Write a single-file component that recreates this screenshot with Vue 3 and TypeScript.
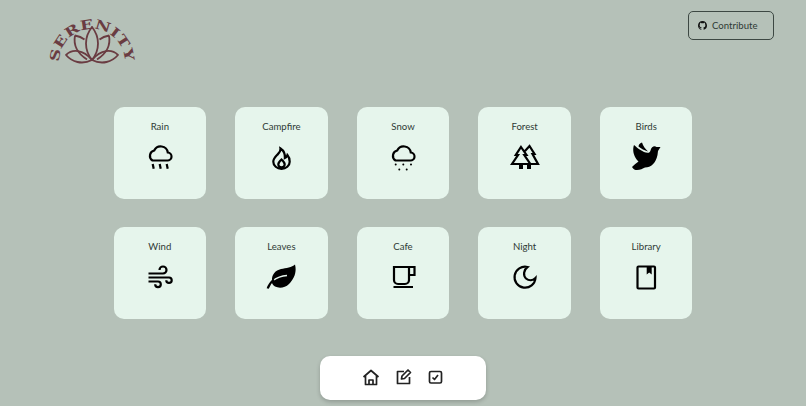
<script setup lang="ts">
interface Sound {
  name: string
  line?: string
  solid?: string
  vein?: string
}

const cloud = 'M7.500 18.500h14.700a4 4 0 0 0 .6-8 7.200 7.200 0 0 0-13.600-2A5.500 5.500 0 0 0 7.500 18.500z'

const sounds: Sound[] = [
  { name: 'Rain', line: cloud + 'M7.700 22l1 4.800M14.700 22l1 4.800M21.700 22l1 4.800' },
  {
    name: 'Campfire',
    line: 'M14.500 6.500c.5 3-1.500 4.500-3.500 6.500-2 2-3.700 3.700-3.700 6.700a8.200 7.200 0 0 0 16.400 0c0-3-.8-5-2.300-6.700-.5 1.500-1.300 2.500-2.500 3 .3-4-1.400-7.500-4.400-9.500zM15.500 17.500c-2 1.800-3.200 3-3.200 4.700a3.200 3.200 0 0 0 6.400 0c0-1.700-1.200-2.900-3.200-4.700z',
  },
  {
    name: 'Snow',
    line: cloud,
    solid: 'M6.700 22.500a1 1 0 1 0 2 0a1 1 0 1 0-2 0zM14.300 22.500a1 1 0 1 0 2 0a1 1 0 1 0-2 0zM22 22.500a1 1 0 1 0 2 0a1 1 0 1 0-2 0zM10.300 27.500a1 1 0 1 0 2 0a1 1 0 1 0-2 0zM17.700 27.500a1 1 0 1 0 2 0a1 1 0 1 0-2 0z',
  },
  {
    name: 'Forest',
    line: 'M11 5l5.500 8h-2.200l6 9H2l6-9H5.800zM15 9l4.500-5 5 8h-2l5.500 10h-7.500',
    solid: 'M9 22h4v5H9zM17 22h4v5h-4z',
  },
  {
    name: 'Birds',
    solid: 'M3 3C1.500 7 2 13 6 18l1.500 1.500C5.500 21 3 23 1 25c1.500 2.500 3 3 5 3 3 0 6-1.500 8-2.500 6 0 11-4.500 12.500-12.500l.5-4 2.500-4h-4c-2-1.500-5-.5-6 3.500-.5 1.500-1.500 2.500-3 2.300C12 10.500 7 6.500 3 3zM11 .5C8.500 1.500 7.500 3 7.500 4.500c2.500 2 6 4 9.500 5C14.500 7 12 4 11 .5z',
  },
  { name: 'Wind', line: 'M3.500 11.500H18a3.500 3.500 0 1 0-3.500-3.500M3.500 15.500H24a2.700 2.700 0 1 1-2.700 2.700M3.500 19.500H13a2.800 2.800 0 1 1-2.800 2.800' },
  {
    name: 'Leaves',
    solid: 'M29 2.500C26 5.500 20 6 15 7 9 8.500 5.500 13 6 19v2c.5 1.500 1.500 2.800 3 3.500 4 2 10 1.500 14-2.500 5-5 8-12 6-19.500z',
    vein: 'M7 18.500c4-3 8.500-4.500 14-5',
    line: 'M1.700 26.500C3 22.500 5 20 8 17.500',
  },
  { name: 'Cafe', line: 'M6 5h15v13a4 4 0 0 1-4 4H10a4 4 0 0 1-4-4zM21 5h5.500v8H21M5.500 25H25' },
  { name: 'Night', line: 'M17.500 5C13.500 8 13 13.500 16 16.500c3 2.500 7 2.200 9.500-.5A10.500 10.500 0 1 1 17.500 5z' },
  {
    name: 'Library',
    line: 'M7.500 4.500h15.500a1 1 0 0 1 1 1v20a1 1 0 0 1-1 1H7.500a1 1 0 0 1-1-1v-20a1 1 0 0 1 1-1z',
    solid: 'M15.700 4h5v8.500l-2.500-2-2.500 2z',
  },
]
</script>

<template>
  <div class="page">
    <header class="top">
      <svg class="logo" width="100" height="58" viewBox="0 0 100 58">
        <defs>
          <path id="logo-arc" d="M19 52A33 33 0 0 1 85 52" />
        </defs>
        <text class="logo-text">
          <textPath href="#logo-arc" textLength="103" lengthAdjust="spacingAndGlyphs">SERENITY</textPath>
        </text>
        <g class="lotus">
          <path d="M52 17C44 27 44 40 52 50 60 40 60 27 52 17z" />
          <path d="M35 25.500c3 .5 7 2 9.500 4M35 25.500c-1.500 8 1 17 12 24" />
          <path d="M69 25.500c-3 .5-7 2-9.500 4M69 25.500c1.500 8-1 17-12 24" />
          <path d="M26 45C32 39 43 39 52 50 42 55 32 52 26 45z" />
          <path d="M78 45C72 39 61 39 52 50 62 55 72 52 78 45z" />
        </g>
      </svg>
      <button class="contribute">
        <svg width="9" height="9" viewBox="0 0 16 16" fill="#111">
          <path d="M8 0C3.580 0 0 3.580 0 8c0 3.540 2.290 6.530 5.470 7.590.4.070.55-.17.55-.38 0-.19-.01-.82-.01-1.490-2.010.37-2.530-.49-2.690-.94-.09-.23-.48-.94-.82-1.130-.28-.15-.68-.52-.01-.53.63-.01 1.080.58 1.230.82.720 1.210 1.870.87 2.330.66.070-.52.280-.87.510-1.070-1.780-.2-3.640-.89-3.640-3.950 0-.87.310-1.590.820-2.150-.08-.2-.36-1.020.08-2.120 0 0 .67-.21 2.200.82.640-.18 1.320-.27 2-.27s1.360.09 2 .27c1.530-1.040 2.200-.82 2.200-.82.440 1.100.160 1.920.080 2.120.510.560.820 1.270.820 2.150 0 3.070-1.870 3.750-3.650 3.950.290.250.540.730.540 1.480 0 1.070-.01 1.930-.01 2.200 0 .21.150.460.550.380A8.010 8.010 0 0 0 16 8c0-4.420-3.580-8-8-8z" />
        </svg>
        <span>Contribute</span>
      </button>
    </header>

    <main class="grid">
      <div v-for="sound in sounds" :key="sound.name" class="card">
        <span class="label">{{ sound.name }}</span>
        <svg class="icon" width="30" height="30" viewBox="0 0 30 30">
          <path v-if="sound.solid" :d="sound.solid" fill="#000" />
          <path v-if="sound.vein" :d="sound.vein" fill="none" stroke="#e6f5ec" stroke-width="1.500" />
          <path v-if="sound.line" :d="sound.line" class="stroke" />
        </svg>
      </div>
    </main>

    <nav class="dock">
      <svg width="20" height="20" viewBox="0 0 20 20" class="dock-icon">
        <path d="M2.500 10 10 3.500 17.500 10M4.500 9v8.500h11V9M8 17.500V13h4v4.500" />
      </svg>
      <svg width="20" height="20" viewBox="0 0 20 20" class="dock-icon">
        <path d="M11 4.500H4.500v12h12V10M8.500 12l.5-3 6-6 2.500 2.500-6 6z" />
      </svg>
      <svg width="20" height="20" viewBox="0 0 20 20" class="dock-icon">
        <path d="M6 4.500h9A1.500 1.500 0 0 1 16.500 6v8.500A1.500 1.500 0 0 1 15 16H6a1.500 1.500 0 0 1-1.500-1.500V6A1.500 1.500 0 0 1 6 4.500zM7.500 10.500l2 2L13 8" />
      </svg>
    </nav>
  </div>
</template>

<style>
html,
body {
  background: #b5c1b8;
}
</style>

<style scoped>
.page {
  height: 406px;
  overflow: hidden;
  display: flex;
  flex-direction: column;
  font-family: Lato, 'Liberation Sans', sans-serif;
  color: #2f3a35;
}

.top {
  display: flex;
  justify-content: space-between;
  align-items: flex-start;
  padding: 10px 32px 0 40px;
}

.logo {
  display: block;
}

.logo-text {
  font-family: 'DejaVu Serif', serif;
  font-weight: 700;
  font-size: 13px;
  fill: #6a3c42;
}

.lotus path {
  fill: none;
  stroke: #6a3c42;
  stroke-width: 1.800;
  stroke-linejoin: round;
}

.contribute {
  display: flex;
  align-items: center;
  gap: 5px;
  width: 86px;
  height: 29px;
  margin-top: 1px;
  padding: 0 0 0 9px;
  background: transparent;
  border: 1.700px solid #3d4843;
  border-radius: 5px;
  font-family: inherit;
  font-size: 9.600px;
  color: #2f3a35;
}

.grid {
  display: grid;
  grid-template-columns: repeat(5, 92.500px);
  gap: 28px 29.100px;
  justify-content: center;
  margin-top: 39px;
}

.card {
  height: 92px;
  padding-top: 12px;
  box-sizing: border-box;
  display: flex;
  flex-direction: column;
  align-items: center;
  background: #e6f5ec;
  border-radius: 10px;
}

.label {
  font-size: 9.600px;
  line-height: 16px;
}

.icon {
  margin-top: 7px;
}

.stroke {
  fill: none;
  stroke: #000;
  stroke-width: 2.200;
}

.dock {
  align-self: center;
  width: 166px;
  height: 44px;
  margin-top: 37px;
  padding-bottom: 2px;
  box-sizing: border-box;
  display: flex;
  justify-content: center;
  align-items: center;
  gap: 12px;
  background: #fff;
  border-radius: 10px;
  box-shadow: 0 2px 4px rgba(0, 0, 0, 0.2);
}

.dock-icon path {
  fill: none;
  stroke: #222;
  stroke-width: 1.700;
  stroke-linejoin: round;
}
</style>
